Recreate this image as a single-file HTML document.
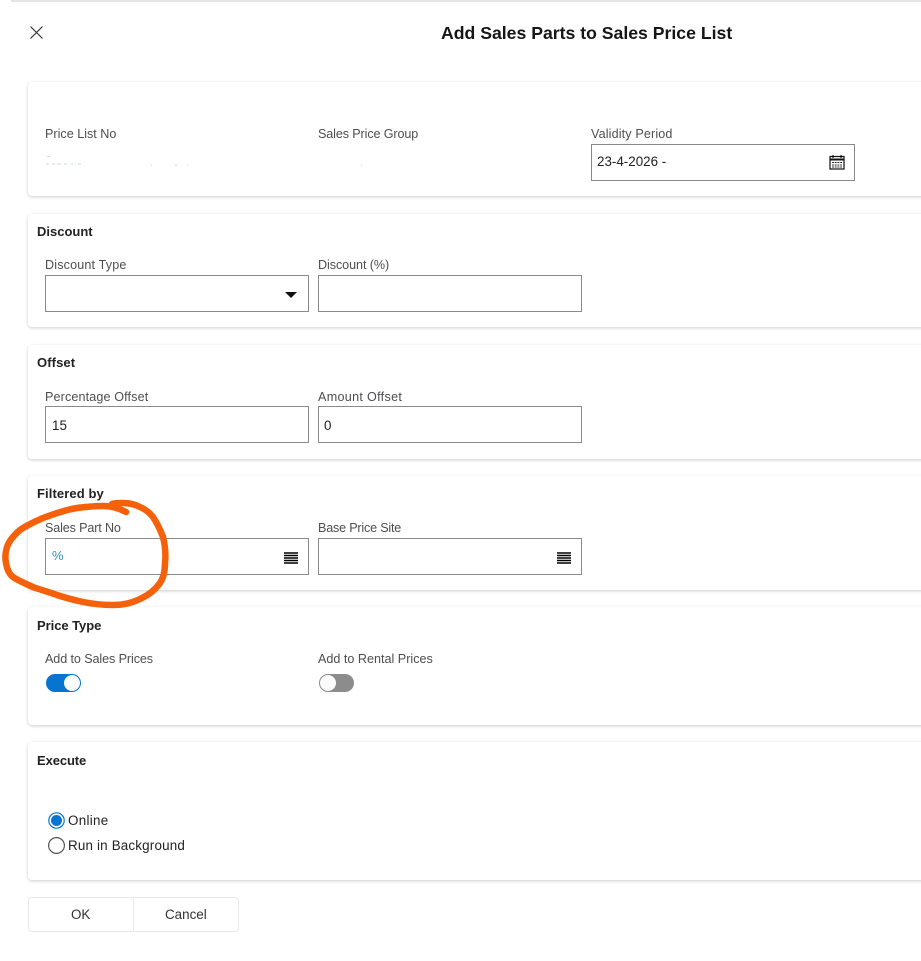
<!DOCTYPE html>
<html><head><meta charset="utf-8"><style>
html,body{margin:0;padding:0;background:#fff}
body{width:921px;height:961px;position:relative;overflow:hidden;font-family:"Liberation Sans",sans-serif;color:#222}
.card{position:absolute;left:28px;width:900px;background:#fff;border-radius:4px;box-shadow:0 1px 3px rgba(0,0,0,.2)}
.t{position:absolute;white-space:nowrap;line-height:16px}
.l{font-size:12.6px;color:#4e4e50}
.h{font-size:13px;font-weight:bold;color:#222}
.v{font-size:13.4px;color:#222}
.i{position:absolute;height:35px;border:1px solid #8a8a8a;background:#fff}
.w1{width:262px}
.tg{position:absolute;width:35px;height:18px;border-radius:9px}
.kn{position:absolute;top:1px;width:16px;height:16px;border-radius:50%;background:#fbfbfb}
svg{position:absolute;overflow:visible}
</style></head><body>
<div style="position:absolute;left:11px;top:0;width:910px;height:2px;background:#e6e6e6"></div>
<svg style="left:30px;top:26px" width="13" height="13"><path d="M0.5 0.5L12.5 12.5M12.5 0.5L0.5 12.5" stroke="#333" stroke-width="1.2" fill="none"/></svg>
<div class="t" style="left:441px;top:22px;font-size:17.65px;line-height:22px;font-weight:bold;color:#161616">Add Sales Parts to Sales Price List</div>

<div class="card" style="top:82px;height:114px"></div>
<div class="card" style="top:214px;height:113px"></div>
<div class="card" style="top:345px;height:114px"></div>
<div class="card" style="top:476px;height:114px"></div>
<div class="card" style="top:607px;height:118px"></div>
<div class="card" style="top:742px;height:138px"></div>

<div class="t l" style="left:45px;top:126px">Price List No</div>
<div class="t l" style="left:318px;top:126px;letter-spacing:-.12px">Sales Price Group</div>
<div class="t l" style="left:591px;top:126px;letter-spacing:.13px">Validity Period</div>
<svg style="left:45px;top:154px" width="320" height="14"><path d="M2 2.5h3M1 10h3M7 10h3M12 10h4M19 10h3M26 10h2M33 10h3M106 11h1M130 11h2M142 11h1M316 11h1" stroke="#c4dbe6" stroke-width="1" fill="none"/></svg>
<div class="i w1" style="left:591px;top:144px"></div>
<div class="t v" style="left:597px;top:154px">23-4-2026 -</div>
<svg style="left:829px;top:154px" width="16" height="16"><rect x="1" y="2.5" width="14" height="12.5" fill="#fff" stroke="#111" stroke-width="1.2"/><path d="M1 5.5h14" stroke="#111" stroke-width="2"/><path d="M4 1v3M12 1v3" stroke="#111" stroke-width="1.2"/><path d="M3 8.5h10M3 11h10M3 13h10" stroke="#333" stroke-width="1.1" stroke-dasharray="2 .7"/></svg>

<div class="t h" style="left:37px;top:224px">Discount</div>
<div class="t l" style="left:45px;top:257px;letter-spacing:.15px">Discount Type</div>
<div class="t l" style="left:318px;top:257px;letter-spacing:-.08px">Discount (%)</div>
<div class="i w1" style="left:45px;top:275px"></div>
<svg style="left:285px;top:292px" width="12" height="6"><path d="M0 0H12L6 6Z" fill="#111"/></svg>
<div class="i w1" style="left:318px;top:275px"></div>

<div class="t h" style="left:37px;top:355px;letter-spacing:.1px">Offset</div>
<div class="t l" style="left:45px;top:389px;letter-spacing:.12px">Percentage Offset</div>
<div class="t l" style="left:318px;top:389px;letter-spacing:.3px">Amount Offset</div>
<div class="i w1" style="left:45px;top:406px"></div>
<div class="t v" style="left:52px;top:418px">15</div>
<div class="i w1" style="left:318px;top:406px"></div>
<div class="t v" style="left:324px;top:418px">0</div>

<div class="t h" style="left:37px;top:486px;letter-spacing:.1px">Filtered by</div>
<div class="t l" style="left:45px;top:520px;letter-spacing:-.15px">Sales Part No</div>
<div class="t l" style="left:318px;top:520px;letter-spacing:-.2px">Base Price Site</div>
<div class="i w1" style="left:45px;top:538px"></div>
<div class="t" style="left:52px;top:548px;font-size:13px;color:#2f8fbd">%</div>
<svg style="left:284px;top:552px" width="14" height="13"><path d="M0 1h14M0 3.5h14M0 6h14M0 8.5h14M0 11h14" stroke="#000" stroke-width="1.4"/></svg>
<div class="i w1" style="left:318px;top:538px"></div>
<svg style="left:557px;top:552px" width="14" height="13"><path d="M0 1h14M0 3.5h14M0 6h14M0 8.5h14M0 11h14" stroke="#000" stroke-width="1.4"/></svg>

<div class="t h" style="left:37px;top:618px;letter-spacing:-.05px">Price Type</div>
<div class="t l" style="left:45px;top:651px;letter-spacing:-.1px">Add to Sales Prices</div>
<div class="t l" style="left:318px;top:651px">Add to Rental Prices</div>
<div class="tg" style="left:46px;top:674px;background:#0774d1"><div class="kn" style="left:18px"></div></div>
<div class="tg" style="left:319px;top:674px;background:#8c8c8c"><div class="kn" style="left:1px"></div></div>

<div class="t h" style="left:37px;top:753px;letter-spacing:-.1px">Execute</div>
<svg style="left:47px;top:811px" width="20" height="44"><circle cx="9.5" cy="9.5" r="7.7" fill="#fff" stroke="#0774d1" stroke-width="1.2"/><circle cx="9.5" cy="9.5" r="5.5" fill="#0774d1"/><circle cx="9.5" cy="34.5" r="7.9" fill="#fff" stroke="#555" stroke-width="1.2"/></svg>
<div class="t v" style="left:68px;top:813px;letter-spacing:.3px">Online</div>
<div class="t v" style="left:68px;top:838px;letter-spacing:.18px">Run in Background</div>

<div style="position:absolute;left:28px;top:897px;height:33px;border:1px solid #e8e8e8;border-right:1px solid #e4e4e4;border-radius:4px 0 0 4px;width:104px"></div>
<div style="position:absolute;left:133px;top:897px;width:104px;height:33px;border:1px solid #e8e8e8;border-radius:0 4px 4px 0"></div>
<div class="t v" style="left:71px;top:907px;color:#333">OK</div>
<div class="t v" style="left:165px;top:907px;color:#333">Cancel</div>

<svg style="left:0;top:0" width="921" height="961"><path d="M126 512C118 508 112 506 103 506C92 506 85 507 77 508C65 510 54 514 43 518C34 522 27 525 20 530C13 536 9 541 7 547C5 553 5 558 6 563C7 569 9 574 13 577C19 581 26 584 33 587C41 590 49 592 57 595C66 598 74 600 83 602C93 604 103 605 113 605C123 605 132 603 140 599C149 595 155 590 160 583C164 577 165 570 165 563C166 554 165 545 163 537C160 529 157 523 153 517C149 512 145 509 140 507C134 504 128 503 123 503C119 503 115 503 112 504" fill="none" stroke="#f5610a" stroke-width="6.5" stroke-linecap="round" stroke-linejoin="round"/></svg>
</body></html>
